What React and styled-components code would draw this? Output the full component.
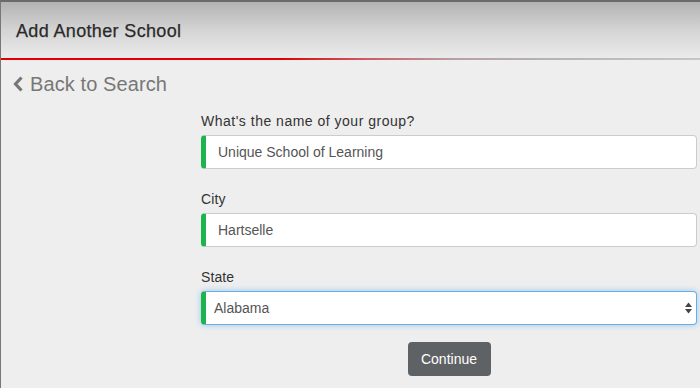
import React from "react"
import styled, { createGlobalStyle } from "styled-components"

const GlobalStyle = createGlobalStyle`
  html, body {
    margin: 0;
    padding: 0;
    background: #eeeeee;
  }
  body {
    font-family: "Liberation Sans", Arial, sans-serif;
    color: #333;
  }
`

const Page = styled.div`
  width: 700px;
  height: 388px;
  box-sizing: border-box;
  border-left: 1px solid #777;
  border-top: 2px solid #6a6a6a;
  background: #eeeeee;
  overflow: hidden;
`

const Header = styled.div`
  height: 58px;
  display: flex;
  align-items: center;
  padding: 2px 0 0 15px;
  box-sizing: border-box;
  background: linear-gradient(to bottom, #b3b3b3 0%, #d4d4d4 50%, #ebebeb 100%);
  border-bottom: 2px solid transparent;
  border-image: linear-gradient(
      to right,
      #e00000 0%,
      #e00000 40%,
      #cc5a66 52%,
      #b8a0a4 65%,
      #b4b4b4 78%,
      #c6c6c6 100%
    )
    1;
`

const Title = styled.h1`
  margin: 0;
  font-size: 18px;
  letter-spacing: 0.35px;
  font-weight: normal;
  color: #2a2a2a;
  -webkit-text-stroke: 0.25px #2a2a2a;
`

const BackLink = styled.a`
  display: flex;
  align-items: center;
  gap: 6px;
  margin: 11px 0 0 12px;
  height: 26px;
  font-size: 20px;
  letter-spacing: 0.1px;
  color: #777;
  text-decoration: none;
`

const Form = styled.form`
  display: flex;
  flex-direction: column;
  margin: 0 3px 0 200px;
  padding-top: 14px;
`

const Group = styled.div`
  display: flex;
  flex-direction: column;
  margin-bottom: ${(props) => props.$gap || 20}px;
`

const Label = styled.label`
  font-size: 14px;
  line-height: 20px;
  letter-spacing: ${(props) => (props.$wide ? "0.5px" : "0.1px")};
  margin-bottom: 4px;
  color: #333;
`

const fieldBase = `
  box-sizing: border-box;
  height: 34px;
  width: 100%;
  background: #fff;
  border: 1px solid #cccccc;
  border-left: 5px solid #1db34d;
  border-radius: 4px;
  font-family: "Liberation Sans", Arial, sans-serif;
  font-size: 14px;
  color: #555;
  outline: none;
`

const Input = styled.input`
  ${fieldBase}
  padding: 0 12px;
`

const SelectWrap = styled.div`
  position: relative;
`

const Select = styled.select`
  ${fieldBase}
  appearance: none;
  -webkit-appearance: none;
  padding: 0 8px;
  border-color: #66afe9;
  border-left-color: #1db34d;
  box-shadow: 0 0 6px rgba(102, 175, 233, 0.6);
`

const Arrows = styled.svg`
  position: absolute;
  right: 4px;
  top: 11px;
  pointer-events: none;
`

const ButtonRow = styled.div`
  display: flex;
  justify-content: center;
`

const Button = styled.button`
  height: 34px;
  width: 83px;
  border: none;
  border-radius: 4px;
  background: #5f6264;
  color: #fff;
  font-family: "Liberation Sans", Arial, sans-serif;
  font-size: 14px;
`

const fields = [
  { label: "What's the name of your group?", value: "Unique School of Learning", wide: true },
  { label: "City", value: "Hartselle" },
]

const App = () => (
  <Page>
    <GlobalStyle />
    <Header>
      <Title>Add Another School</Title>
    </Header>
    <BackLink href="#">
      <svg width="11" height="16" viewBox="0 0 11 16">
        <path d="M8.5 1.5 L2.5 8 L8.5 14.5" fill="none" stroke="#777" strokeWidth="3.2" />
      </svg>
      Back to Search
    </BackLink>
    <Form onSubmit={(e) => e.preventDefault()}>
      {fields.map((f) => (
        <Group key={f.label}>
          <Label $wide={f.wide}>{f.label}</Label>
          <Input defaultValue={f.value} />
        </Group>
      ))}
      <Group $gap={17}>
        <Label>State</Label>
        <SelectWrap>
          <Select defaultValue="AL">
            <option value="AL">Alabama</option>
            <option value="AK">Alaska</option>
          </Select>
          <Arrows width="9" height="12" viewBox="0 0 9 12">
            <path d="M4.5 0.5 L8 5 L1 5 Z" fill="#444" />
            <path d="M4.5 11.5 L8 7 L1 7 Z" fill="#444" />
          </Arrows>
        </SelectWrap>
      </Group>
      <ButtonRow>
        <Button type="submit">Continue</Button>
      </ButtonRow>
    </Form>
  </Page>
)

export default App
